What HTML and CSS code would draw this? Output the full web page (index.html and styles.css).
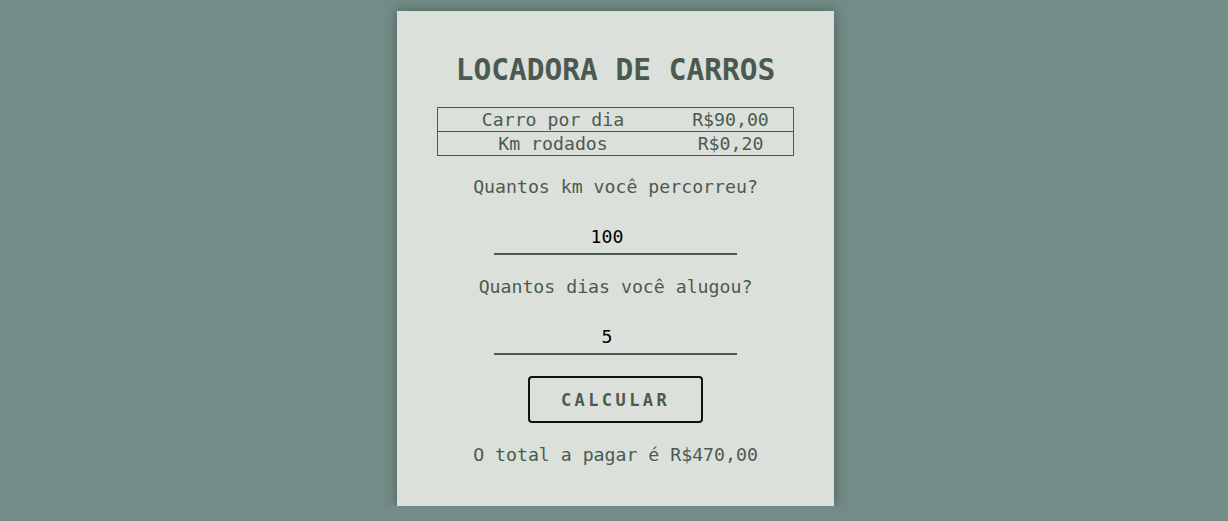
FILE: index.html
```html
<!DOCTYPE html>
<html lang="pt-BR">
<head>
<meta charset="utf-8">
<title>Locadora de Carros</title>
<link rel="stylesheet" href="styles.css">
</head>
<body>
<main class="card">
  <h1 class="title">LOCADORA DE CARROS</h1>
  <div class="prices">
    <div class="row">
      <span class="name">Carro por dia</span>
      <span class="value">R$90,00</span>
    </div>
    <div class="row">
      <span class="name">Km rodados</span>
      <span class="value">R$0,20</span>
    </div>
  </div>
  <label class="label label-first" for="km">Quantos km você percorreu?</label>
  <input class="field" id="km" type="text" value="100">
  <label class="label" for="dias">Quantos dias você alugou?</label>
  <input class="field" id="dias" type="text" value="5">
  <button class="btn" type="button">CALCULAR</button>
  <p class="result">O total a pagar é R$470,00</p>
</main>
</body>
</html>
```

FILE: styles.css
```css
* { box-sizing: border-box; }

body {
  margin: 0;
  background: #738c87;
  display: flex;
  justify-content: center;
  padding: 11px 0 0 3px;
  font-family: "DejaVu Sans Mono", "Liberation Mono", monospace;
  color: #4b5a51;
}

.card {
  width: 437px;
  height: 495px;
  background: #dce0db;
  box-shadow: 0 0 12px rgba(0, 0, 0, 0.35);
  padding: 41px 40px 0;
  display: flex;
  flex-direction: column;
  align-items: center;
}

.title {
  margin: 0;
  font-size: 29.5px;
  line-height: 36px;
  font-weight: bold;
  color: #4b5a51;
}

.prices {
  margin-top: 19px;
  width: 357px;
  border: 1px solid #4b5a51;
  font-size: 18.2px;
}

.row {
  display: grid;
  grid-template-columns: 230px 1fr;
  height: 23px;
  line-height: 23px;
  text-align: center;
}

.row + .row {
  height: 24px;
  border-top: 1px solid #4b5a51;
}

.label {
  display: block;
  margin-top: 20px;
  font-size: 18.2px;
  line-height: 24px;
  text-align: center;
}

.label-first {
  margin-top: 19px;
}

.field {
  margin-top: 25px;
  width: 243px;
  height: 31px;
  border: none;
  border-bottom: 2px solid #4b5a51;
  background: transparent;
  font-family: inherit;
  font-size: 18.2px;
  line-height: 24px;
  padding: 0 17px 5px 0;
  text-align: center;
  color: #000;
  outline: none;
}

.btn {
  margin-top: 21px;
  width: 175px;
  height: 47px;
  border: 2px solid #111;
  border-radius: 4px;
  background: transparent;
  font-family: inherit;
  font-size: 17px;
  font-weight: bold;
  letter-spacing: 3.4px;
  padding: 0;
  color: #4b5a51;
}

.result {
  margin: 20px 0 0;
  font-size: 18.2px;
  line-height: 24px;
}
```
